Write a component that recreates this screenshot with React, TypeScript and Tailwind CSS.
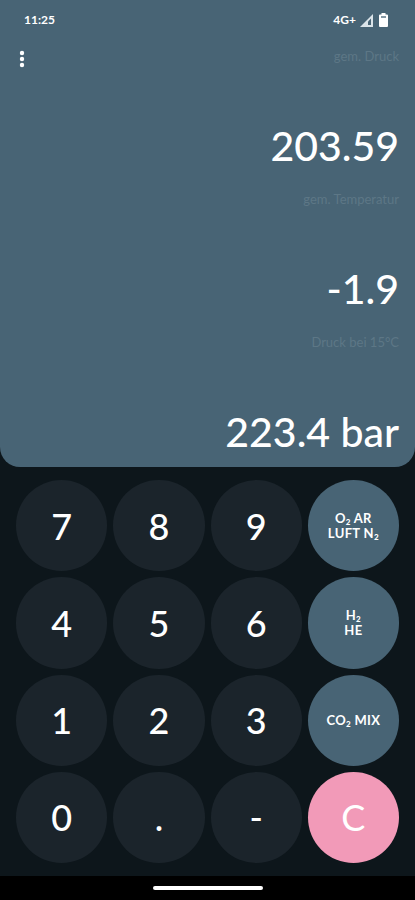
import type { ReactNode } from "react";

const sub2 = <sub className="bottom-0 align-[-2px] text-[8px] leading-none font-black">2</sub>;

type Key = { name: string; face: ReactNode; style: string };

const digit = "bg-[#1b242b] text-4xl font-medium";
const gas = "bg-[#486475] text-[13px] leading-[14px] font-bold tracking-wide";

const keys: Key[] = [
  { name: "7", face: "7", style: digit },
  { name: "8", face: "8", style: digit },
  { name: "9", face: "9", style: digit },
  {
    name: "O2 AR LUFT N2",
    face: (
      <>
        <span className="block">O{sub2} AR</span>
        <span className="block">LUFT N{sub2}</span>
      </>
    ),
    style: gas,
  },
  { name: "4", face: "4", style: digit },
  { name: "5", face: "5", style: digit },
  { name: "6", face: "6", style: digit },
  {
    name: "H2 HE",
    face: (
      <>
        <span className="block">H{sub2}</span>
        <span className="block">HE</span>
      </>
    ),
    style: gas,
  },
  { name: "1", face: "1", style: digit },
  { name: "2", face: "2", style: digit },
  { name: "3", face: "3", style: digit },
  { name: "CO2 MIX", face: <>CO{sub2} MIX</>, style: gas },
  { name: "0", face: "0", style: digit },
  { name: ".", face: ".", style: digit },
  { name: "-", face: "-", style: digit },
  { name: "C", face: "C", style: "bg-[#f29ab8] text-4xl font-normal" },
];

const valueStyle =
  "mt-14 block h-12 w-full bg-transparent text-right text-[41px] leading-[48px] font-medium text-white outline-none";
const labelStyle = "block text-right text-[13px] leading-5 text-[#5d7786]";

function Field({ id, label, value }: { id: string; label: string; value: string }) {
  return (
    <div className="pt-2 pb-[11px]">
      <label htmlFor={id} className={labelStyle}>
        {label}
      </label>
      <input id={id} type="text" inputMode="decimal" defaultValue={value} className={valueStyle} />
    </div>
  );
}

function StatusBar() {
  return (
    <div className="flex h-[38px] items-center justify-between pt-0.5 pr-[25px] pl-6 text-xs font-bold">
      <span>11:25</span>
      <div className="flex items-center gap-1">
        <span>4G+</span>
        <svg width="13" height="13" viewBox="0 0 13 13" aria-hidden="true">
          <path d="M0 13 13 0v13Z" fill="#dbe4e9" />
          <path d="M8 11V7.500L11 4.500V11Z" fill="#486475" />
        </svg>
        <svg width="13" height="14" viewBox="0 0 13 14" aria-hidden="true">
          <path d="M4.500 0h4v1.500H10a1 1 0 0 1 1 1V13a1 1 0 0 1-1 1H3a1 1 0 0 1-1-1V2.500a1 1 0 0 1 1-1h1.500Z" fill="#fff" />
          <path d="M4 3h5v2H4Z" fill="#8397a3" />
        </svg>
      </div>
    </div>
  );
}

export default function App() {
  return (
    <div className="flex min-h-screen flex-col bg-[#0d161b] font-['Lato','Liberation_Sans',sans-serif] text-white">
      <header className="rounded-b-[20px] bg-[#486475]">
        <StatusBar />
        <div className="flex items-start pr-4 pl-3">
          <button type="button" aria-label="Menü" className="mt-[11px] flex h-5 w-5 items-center justify-center">
            <svg width="6" height="18" viewBox="0 0 6 18" fill="#fff" aria-hidden="true">
              <circle cx="3" cy="3" r="2.200" />
              <circle cx="3" cy="9" r="2.200" />
              <circle cx="3" cy="15" r="2.200" />
            </svg>
          </button>
          <div className="min-w-0 flex-1">
            <Field id="druck" label="gem. Druck" value="203.59" />
            <Field id="temperatur" label="gem. Temperatur" value="-1.9" />
            <div className="pt-2 pb-[11px]">
              <label htmlFor="ergebnis" className={labelStyle}>
                Druck bei 15°C
              </label>
              <output id="ergebnis" htmlFor="druck temperatur" className={valueStyle}>
                223.4 bar
              </output>
            </div>
          </div>
        </div>
      </header>

      <main className="grid flex-1 grid-cols-4 content-start gap-1.5 px-4 pt-[13px] pb-3">
        {keys.map((key) => (
          <button
            key={key.name}
            type="button"
            aria-label={key.name}
            className={`flex aspect-square items-center justify-center rounded-full text-center ${key.style}`}
          >
            <span>{key.face}</span>
          </button>
        ))}
      </main>

      <footer className="flex h-6 items-center justify-center bg-black">
        <div className="h-1 w-[110px] rounded-full bg-white" />
      </footer>
    </div>
  );
}
